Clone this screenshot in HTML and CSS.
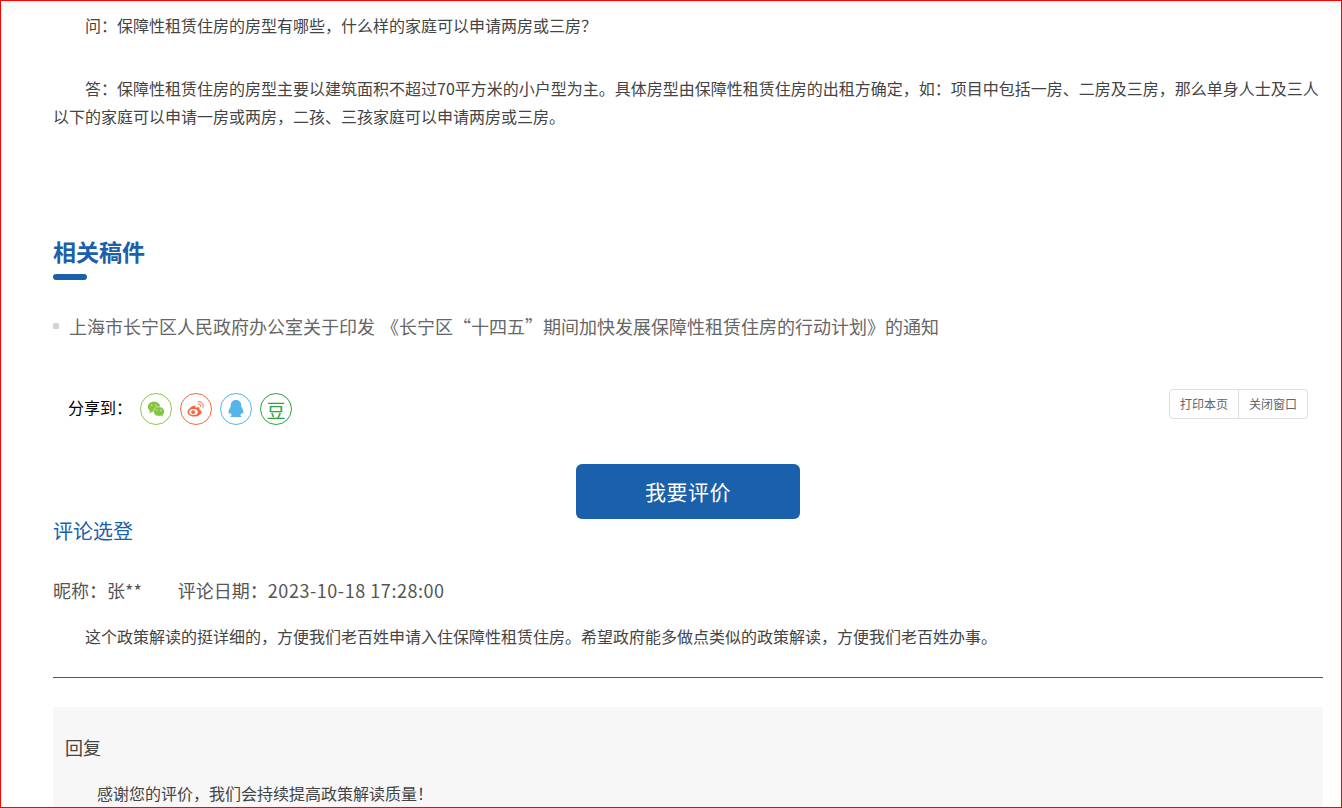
FILE: index.html
```html
<!DOCTYPE html>
<html lang="zh-CN">
<head>
    <meta charset="UTF-8">
    <title>政策解读</title>
    <link rel="stylesheet" href="styles.css">
</head>
<body>
    <div class="page">
        <div class="article">
            <p class="question">问：保障性租赁住房的房型有哪些，什么样的家庭可以申请两房或三房？</p>
            <p class="answer">答：保障性租赁住房的房型主要以建筑面积不超过70平方米的小户型为主。具体房型由保障性租赁住房的出租方确定，如：项目中包括一房、二房及三房，那么单身人士及三人以下的家庭可以申请一房或两房，二孩、三孩家庭可以申请两房或三房。</p>
        </div>

        <h2 class="relatedTitle">相关稿件</h2>
        <ul class="relatedList">
            <li>上海市长宁区人民政府办公室关于印发 《长宁区“十四五”期间加快发展保障性租赁住房的行动计划》的通知</li>
        </ul>

        <div class="shareBar">
            <div class="share">
                <span class="shareLabel">分享到：</span>
                <a class="shareIcon wechat">
                    <svg width="18" height="17" viewBox="0 0 18 17">
                        <ellipse cx="7" cy="5.800" rx="6.200" ry="5.300" fill="#84c441"/>
                        <path d="M3 9.500 2.500 12.500l3-2z" fill="#84c441"/>
                        <ellipse cx="12" cy="10.500" rx="5.500" ry="4.800" fill="#84c441" stroke="#fff" stroke-width=".6"/>
                        <path d="M14.500 14l1.300 2.500-.1-3.200z" fill="#84c441"/>
                        <circle cx="4.800" cy="4.200" r=".6" fill="#fff"/>
                        <circle cx="8.800" cy="4.200" r=".6" fill="#fff"/>
                        <circle cx="10" cy="9.200" r=".6" fill="#fff"/>
                        <circle cx="14" cy="9.200" r=".6" fill="#fff"/>
                    </svg>
                </a>
                <a class="shareIcon weibo">
                    <svg width="18" height="16" viewBox="0 0 18 16">
                        <path d="M7 4.500C3.500 6 .5 8.500.5 11c0 2.800 3.300 4.500 6.500 4.500 4.500 0 7.500-2.500 7.500-4.600 0-1.400-1.300-2-2.100-2.200.4-1.300.1-2.200-.9-2.400-1-.2-2.500.5-3 .7.300-1.300-.1-2.700-1.500-2z" fill="#f8683c"/>
                        <ellipse cx="6.500" cy="11" rx="4.300" ry="3" fill="#fff"/>
                        <circle cx="6.200" cy="11.200" r="1.900" fill="#f8683c"/>
                        <path d="M11 .8c3-.5 6 1.900 5 5.500M11.500 3.200c1.500-.2 2.600 1 2.200 2.500" fill="none" stroke="#f59a80" stroke-width="1.300" stroke-linecap="round"/>
                    </svg>
                </a>
                <a class="shareIcon qq">
                    <svg width="16" height="18" viewBox="2 1 16 18">
                        <path d="M10 1c3.500 0 5.300 2.600 5.300 5.500 0 .8 0 1.200.3 1.700 1 1.500 2.200 3.800 1.800 6-.2 1-.9.800-1.800-.5-.2 1.200-.8 2.100-1.600 2.800 1.200.4 1.800.9 1.600 1.500H4.400c-.2-.6.400-1.100 1.600-1.500-.8-.7-1.400-1.600-1.600-2.800-.9 1.300-1.600 1.500-1.800.5-.4-2.200.8-4.500 1.800-6 .3-.5.300-.9.300-1.700C4.700 3.600 6.500 1 10 1z" fill="#55b4ec"/>
                    </svg>
                </a>
                <a class="shareIcon douban">豆</a>
            </div>
            <div class="pageTools">
                <a>打印本页</a>
                <a>关闭窗口</a>
            </div>
        </div>

        <div class="commentAction">
            <a class="commentButton">我要评价</a>
        </div>

        <h3 class="commentTitle">评论选登</h3>
        <div class="commentMeta">
            <span>昵称：张**</span>
            <span>评论日期：<span class="commentDate">2023-10-18 17:28:00</span></span>
        </div>
        <p class="commentText">这个政策解读的挺详细的，方便我们老百姓申请入住保障性租赁住房。希望政府能多做点类似的政策解读，方便我们老百姓办事。</p>

        <div class="reply">
            <div class="replyTitle">回复</div>
            <p class="replyText">感谢您的评价，我们会持续提高政策解读质量！</p>
        </div>
    </div>
</body>
</html>
```

FILE: styles.css
```css
html, body {
    margin: 0;
    height: 100%;
    overflow: hidden;
}

body {
    font-family: "Noto Sans CJK SC", "Liberation Sans", sans-serif;
    color: #444;
    background: #fff;
    text-spacing-trim: space-all;
}

a {
    text-decoration: none;
}

.page {
    box-sizing: border-box;
    height: 808px;
    overflow: hidden;
    padding: 10px 18px 0 52px;
    border: 1px solid #f00;
    background: linear-gradient(#f6f6f6, #fff 10px);
}

.article p {
    margin: 0;
    font-size: 16px;
    line-height: 28px;
    text-indent: 32px;
}

.question {
    padding-bottom: 35px;
}

.relatedTitle {
    display: inline-block;
    margin: 104px 0 0;
    padding-bottom: 12px;
    font-size: 23px;
    line-height: 34px;
    font-weight: 700;
    color: #1a60aa;
    position: relative;
}

.relatedTitle::after {
    content: "";
    position: absolute;
    left: 0;
    bottom: 0;
    width: 34px;
    height: 6px;
    border-radius: 3px;
    background: #1a60aa;
}

.relatedList {
    margin: 31px 0 0;
    padding: 0;
    list-style: none;
}

.relatedList li {
    display: flex;
    align-items: center;
    gap: 10px;
    font-size: 18px;
    line-height: 30px;
    word-spacing: 2px;
    color: #666;
}

.relatedList li::before {
    content: "";
    width: 6px;
    height: 6px;
    background: #d4d4d4;
}

.shareBar {
    display: flex;
    justify-content: space-between;
    align-items: flex-start;
    margin-top: 48px;
}

.share {
    display: flex;
    align-items: center;
    gap: 8px;
    padding: 4px 0 0 15px;
}

.shareLabel {
    width: 64px;
    padding-bottom: 5px;
    font-size: 16px;
    color: #000;
}

.shareIcon {
    display: flex;
    align-items: center;
    justify-content: center;
    box-sizing: border-box;
    width: 32px;
    height: 32px;
    border: 1px solid;
    border-radius: 50%;
}

.wechat { border-color: #8cc84b; }
.weibo { border-color: #f8683c; }
.qq { border-color: #55b4ec; }

.douban {
    border-color: #2aa63f;
    color: #2aa63f;
    font-size: 19px;
}

.pageTools {
    display: flex;
    margin-right: 15px;
    border: 1px solid #ddd;
    border-radius: 4px;
}

.pageTools a {
    padding: 0 10px;
    font-size: 12px;
    line-height: 28px;
    color: #666;
}

.pageTools a + a {
    border-left: 1px solid #ddd;
}

.commentAction {
    display: flex;
    justify-content: center;
    margin-top: 39px;
}

.commentButton {
    width: 224px;
    height: 55px;
    border-radius: 6px;
    background: #1a60aa;
    color: #fff;
    font-size: 21px;
    letter-spacing: .5px;
    line-height: 55px;
    text-align: center;
}

.commentTitle {
    margin: -1px 0 0;
    font-size: 20px;
    font-weight: 400;
    line-height: 26px;
    color: #1a60aa;
}

.commentMeta {
    display: flex;
    gap: 36px;
    margin-top: 33px;
    font-size: 18px;
    line-height: 26px;
    color: #555;
}

.commentDate {
    letter-spacing: .55px;
}

.commentText {
    margin: 0;
    padding: 19px 0 27px;
    border-bottom: 1px solid #1a60aa;
    font-size: 16px;
    line-height: 28px;
    text-indent: 32px;
}

.reply {
    margin-top: 29px;
    padding: 27px 12px 40px;
    background: #f7f7f7;
}

.replyTitle {
    font-size: 18px;
    line-height: 26px;
}

.replyText {
    margin: 19px 0 0;
    font-size: 16px;
    line-height: 28px;
    text-indent: 32px;
}
```
